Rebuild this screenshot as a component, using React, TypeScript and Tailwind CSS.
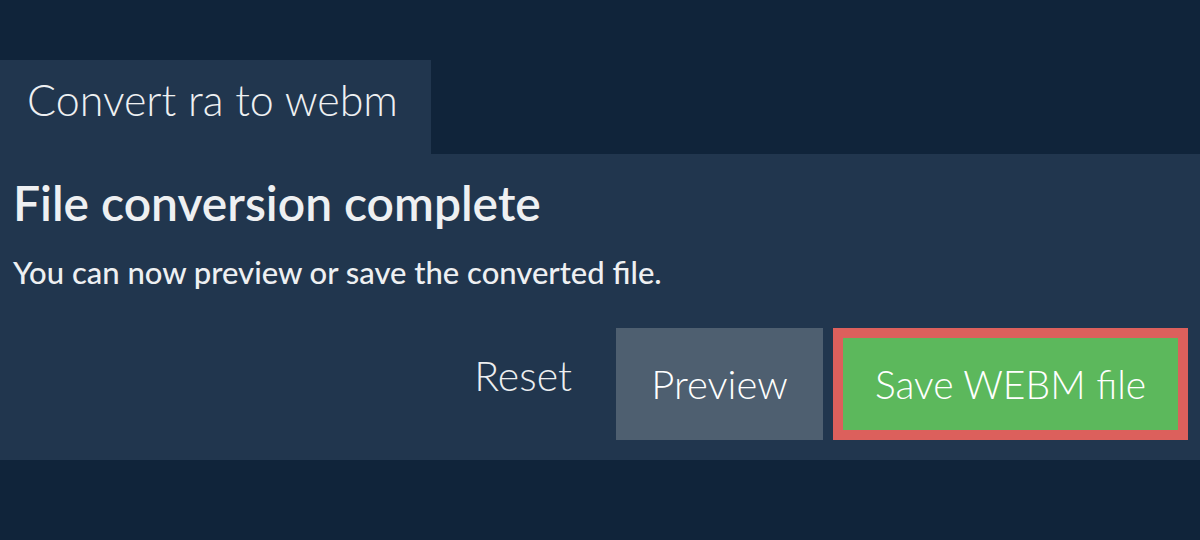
export default function App() {
  return (
    <div className="w-[1200px] h-[540px] bg-[#10243a] pt-[60px] font-['Lato',sans-serif] text-[#eef0f2]">
      <div className="flex">
        <div className="w-[431px] h-[94px] bg-[#21364e] pl-[27px] pt-[14px] text-[43px] font-light leading-[52px]">
          Convert ra to webm
        </div>
      </div>
      <div className="bg-[#21364e] h-[306px] pl-[13px] pr-[12px] pt-[20px]">
        <h1 className="text-[48px] font-semibold leading-[58px]">File conversion complete</h1>
        <p className="mt-[22px] text-[31px] font-medium leading-[37px]">You can now preview or save the converted file.</p>
        <div className="mt-[37px] flex justify-end items-center">
          <button className="h-[112px] pr-[44px] pb-[16px] text-[41px] font-light text-[#eceef0]">Reset</button>
          <button className="w-[207px] h-[112px] bg-[#4e5f70] text-[40px] font-light text-white">Preview</button>
          <button className="ml-[10px] w-[355px] h-[112px] bg-[#5cb85c] border-[10px] border-[#dc605c] text-[39px] font-light text-white">Save WEBM file</button>
        </div>
      </div>
    </div>
  );
}
